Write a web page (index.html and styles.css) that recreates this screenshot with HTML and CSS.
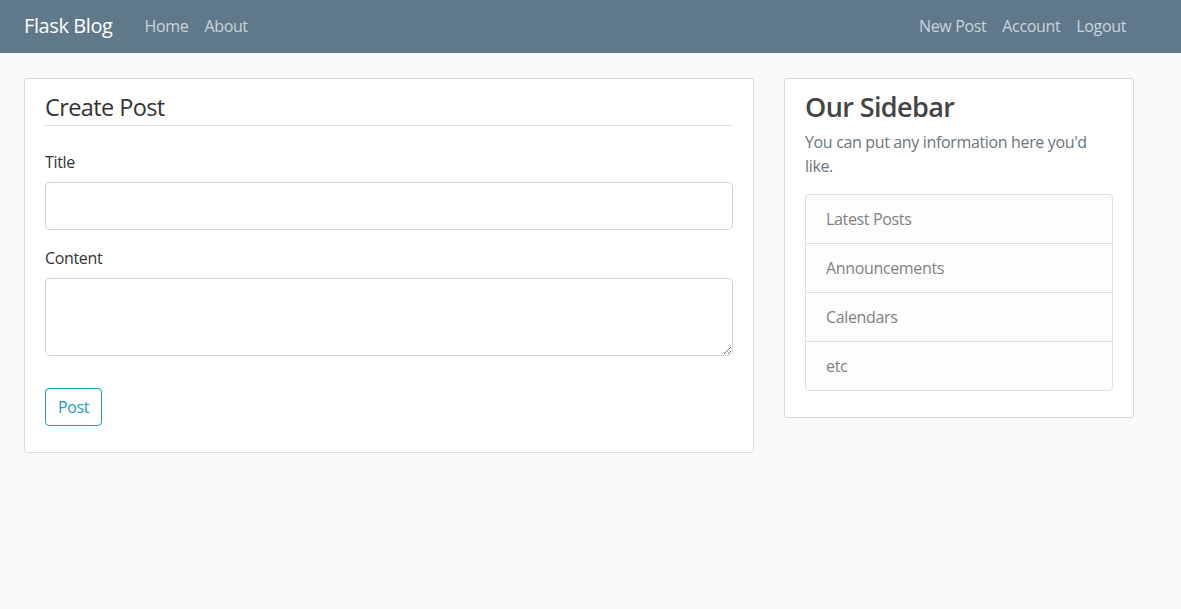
FILE: index.html
```html
<!DOCTYPE html>
<html lang="en">
<head>
<meta charset="utf-8">
<title>Flask Blog - New Post</title>
<link rel="stylesheet" href="styles.css">
</head>
<body>
<header class="site-header">
  <nav class="navbar">
    <div class="nav-left">
      <a class="brand" href="#">Flask Blog</a>
      <a class="nav-link" href="#">Home</a>
      <a class="nav-link" href="#">About</a>
    </div>
    <div class="nav-right">
      <a class="nav-link" href="#">New Post</a>
      <a class="nav-link" href="#">Account</a>
      <a class="nav-link" href="#">Logout</a>
    </div>
  </nav>
</header>
<main class="layout">
  <section class="content-section main-col">
    <form class="post-form">
      <fieldset class="form-fieldset">
        <legend class="form-legend">Create Post</legend>
        <div class="form-group">
          <label class="form-label" for="title">Title</label>
          <input class="form-control" id="title" type="text">
        </div>
        <div class="form-group">
          <label class="form-label" for="content">Content</label>
          <textarea class="form-control form-textarea" id="content"></textarea>
        </div>
      </fieldset>
      <div class="form-group">
        <button class="btn-outline-info" type="button">Post</button>
      </div>
    </form>
  </section>
  <aside class="content-section side-col">
    <h3 class="side-title">Our Sidebar</h3>
    <p class="text-muted">You can put any information here you'd like.</p>
    <ul class="list-group">
      <li class="list-group-item">Latest Posts</li>
      <li class="list-group-item">Announcements</li>
      <li class="list-group-item">Calendars</li>
      <li class="list-group-item">etc</li>
    </ul>
  </aside>
</main>
</body>
</html>
```
FILE: styles.css
```css
* { box-sizing: border-box; }
html, body { margin: 0; padding: 0; }
body {
  background: #fafafa;
  color: #333333;
  font-family: "Open Sans", "Noto Sans", "Liberation Sans", sans-serif;
  font-size: 16px;
  line-height: 24px;
  letter-spacing: -0.35px;
}
a { text-decoration: none; }

.site-header { background: #5f788a; }
.navbar {
  height: 53px;
  display: flex;
  align-items: center;
  justify-content: space-between;
  padding: 0 47px 2px 24px;
}
.nav-left, .nav-right { display: flex; align-items: center; }
.brand {
  color: #ffffff;
  font-size: 20px;
  line-height: 30px;
  letter-spacing: -0.4px;
  margin-right: 24px;
}
.nav-link {
  color: #cbd5db;
  padding: 0 8px;
  font-size: 16px;
}

.layout {
  display: flex;
  align-items: flex-start;
  gap: 30px;
  padding: 25px 0 0 24px;
}
.content-section {
  background: #ffffff;
  padding: 10px 20px;
  border: 1px solid #dddddd;
  border-radius: 3px;
}
.main-col { width: 730px; }
.side-col { width: 350px; }

.post-form { margin: 0; }
.form-fieldset { border: 0; margin: 0 0 16px; padding: 0; min-width: 0; }
.form-legend {
  display: block;
  width: 100%;
  padding: 0;
  font-size: 23.5px;
  line-height: 36px;
  letter-spacing: -0.6px;
  color: #333333;
  border-bottom: 1px solid #dee2e6;
  margin-bottom: 24px;
}
.form-group { margin-bottom: 16px; }
.form-label { display: block; margin-bottom: 8px; color: #333333; }
.form-control {
  display: block;
  width: 100%;
  height: 48px;
  padding: 8px 16px;
  font: inherit;
  font-size: 20px;
  background: #ffffff;
  border: 1px solid #ced4da;
  border-radius: 4.8px;
}
.form-textarea { height: 78px; resize: vertical; }
.btn-outline-info {
  font: inherit;
  font-size: 16px;
  line-height: 24px;
  letter-spacing: -0.35px;
  color: #17a2b8;
  background: transparent;
  border: 1px solid #17a2b8;
  border-radius: 4px;
  padding: 6px 12px;
  margin: 0;
}

.side-title {
  margin: 2px 0 7px;
  font-size: 27px;
  line-height: 32px;
  font-weight: 600;
  letter-spacing: -0.6px;
  color: #444444;
}
.text-muted { color: #6c757d; margin: 0 0 16px; }
.list-group {
  list-style: none;
  margin: 0 0 16px;
  padding: 0;
}
.list-group-item {
  padding: 12px 20px;
  background: #fdfdfe;
  color: #818182;
  border: 1px solid #dfdfdf;
  margin-bottom: -1px;
}
.list-group-item:first-child { border-radius: 4px 4px 0 0; }
.list-group-item:last-child { border-radius: 0 0 4px 4px; margin-bottom: 0; }
```
